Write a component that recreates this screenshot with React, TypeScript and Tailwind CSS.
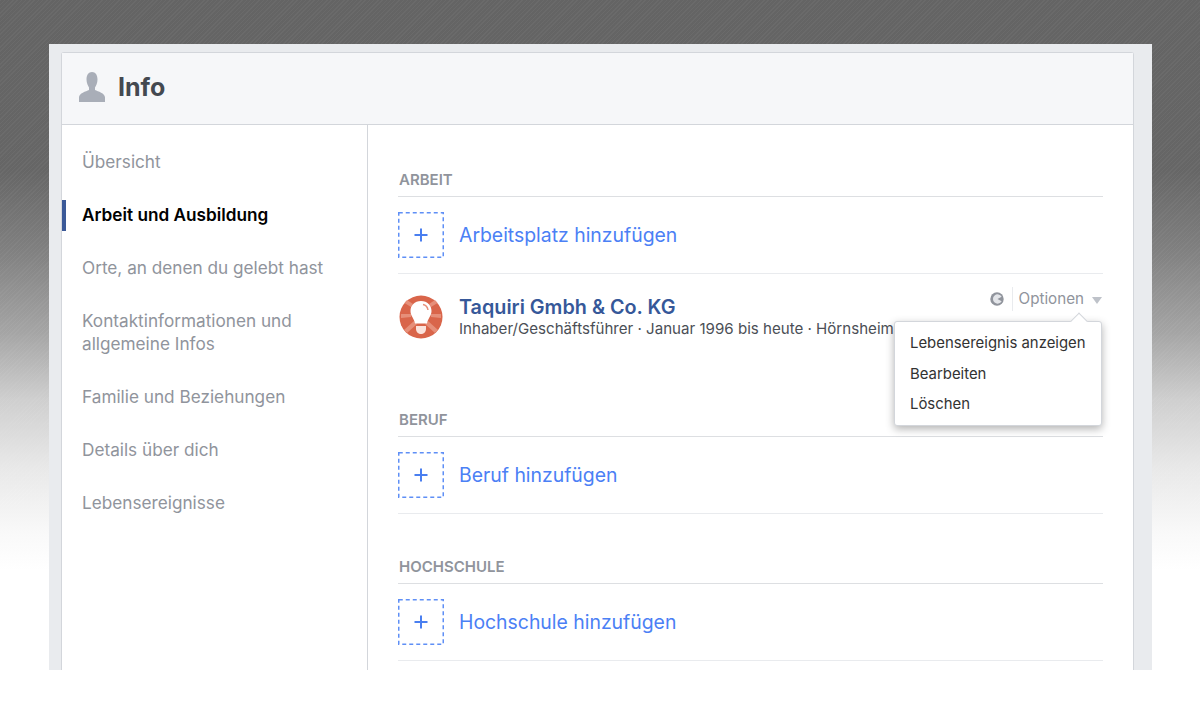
function Section({ title, label }: { title: string; label: string }) {
  return (
    <div>
      <div className="h-[26px] border-b border-[#dddfe2] pl-px text-[15px] font-semibold leading-[17px] text-[#90949c]">{title}</div>
      <div className="flex h-[77px] items-center gap-[15px] border-b border-[#e9ebee]">
        <svg width="46" height="46" viewBox="0 0 46 46" className="shrink-0">
          <rect x="0.750" y="0.750" width="44.500" height="44.500" fill="none" stroke="#5f8ff6" strokeWidth="1.500" strokeDasharray="4 3" />
          <path d="M23 16.500v13M16.500 23h13" stroke="#4a7ff0" strokeWidth="2" />
        </svg>
        <span className="text-[19.4px] leading-[24px] text-[#4b80f5]">{label}</span>
      </div>
    </div>
  );
}

function NavItem({ children, active, tall }: { children: React.ReactNode; active?: boolean; tall?: boolean }) {
  return (
    <div className={`relative mb-[30px] flex items-center pl-[20px] text-[17.2px] leading-[23px] ${tall ? "h-[46px]" : "h-[23px]"} ${active ? "font-semibold text-black" : "text-[#90949c]"}`}>
      {active && <span className="absolute left-0 top-[-3px] h-[31px] w-[4px] bg-[#3b5998]" />}
      <span>{children}</span>
    </div>
  );
}

export default function App() {
  return (
    <div className="h-[720px] w-[1200px] overflow-hidden bg-[repeating-linear-gradient(135deg,rgba(255,255,255,0.04)_0px,rgba(255,255,255,0.04)_1px,transparent_1px,transparent_3px),linear-gradient(180deg,#646464_0px,#666666_170px,#808080_250px,#a5a5a5_333px,#cfcfcf_400px,#e8e8e8_467px,#f9f9f9_533px,#ffffff_570px)] font-['Inter',sans-serif]">
      <div className="ml-[49px] h-[670px] w-[1103px] pt-[44px]">
        <div className="h-[626px] overflow-hidden bg-[#e9ebee] px-[12px] pt-[8px]">
          <div className="relative h-[618px] w-[1073px] rounded-t-[3px] border border-b-0 border-[#d3d6db] bg-white">
            <div className="flex h-[72px] items-center gap-[13px] border-b border-[#d3d6db] bg-[#f6f7f9] pb-[4px] pl-[17px]">
              <svg width="26" height="30" viewBox="0 0 26 30"><path d="M13 0c3.500 0 5.500 3 5.500 7.500 0 3.500-1.500 6.500-2.500 8v2.500c3 1.500 10 3 10 7.500V30H0v-4.500C0 21 7 19.500 10 18v-2.500c-1-1.500-2.500-4.500-2.500-8C7.500 3 9.500 0 13 0Z" fill="#a9aeb8" /></svg>
              <span className="text-[25px] font-bold leading-[30px] text-[#444950]">Info</span>
            </div>
            <div className="flex h-[545px]">
              <div className="w-[306px] shrink-0 border-r border-[#d3d6db] pt-[25px]">
                <NavItem>Übersicht</NavItem>
                <NavItem active>Arbeit und Ausbildung</NavItem>
                <div className="mt-[1px]">
                  <NavItem>Orte, an denen du gelebt hast</NavItem>
                  <NavItem tall>Kontaktinformationen und<br />allgemeine Infos</NavItem>
                </div>
                <NavItem>Familie und Beziehungen</NavItem>
                <NavItem>Details über dich</NavItem>
                <NavItem>Lebensereignisse</NavItem>
              </div>
              <div className="relative w-[766px] pl-[30px] pr-[30px] pt-[46px]">
                <Section title="ARBEIT" label="Arbeitsplatz hinzufügen" />
                <div className="flex h-[137px] gap-[16px] pt-[21px]">
                  <svg width="44" height="44" viewBox="0 0 44 44" className="ml-px shrink-0">
                    <circle cx="22" cy="22" r="21.500" fill="#d9654a" />
                    <g fill="#e68f79">
                      <path d="M15 26 5 35 8 38 18 29Z" />
                      <path d="M29 26 39 35 36 38 26 29Z" />
                      <path d="M12 19 2 19V23L12 22Z" />
                      <path d="M32 19 42 19V23L32 22Z" />
                      <path d="M14 9 8 5 5.500 8 12 12Z" />
                      <path d="M30 9 36 5 38.500 8 32 12Z" />
                    </g>
                    <path d="M22 6c6.500 0 10.500 4.500 10.500 10 0 5-3.500 7-4.500 12.500H16C15 23 11.500 21 11.500 16 11.500 10.500 15.500 6 22 6Z" fill="#fff" />
                    <path d="M17 31h10v3c0 3-2.500 5-5 5s-5-2-5-5Z" fill="#fbe3dc" />
                    <path d="M24 9.500c2.500.5 4.500 2.500 5 5.500" fill="none" stroke="#e68f79" strokeWidth="1.500" />
                  </svg>
                  <div>
                    <div className="text-[19.8px] font-semibold leading-[24px] text-[#365899]">Taquiri Gmbh &amp; Co. KG</div>
                    <div className="whitespace-nowrap text-[15.1px] leading-[19px] text-[#4b4f56]">Inhaber/Geschäftsführer · Januar 1996 bis heute · Hörnsheim</div>
                  </div>
                </div>
                <Section title="BERUF" label="Beruf hinzufügen" />
                <div className="h-[44px]" />
                <Section title="HOCHSCHULE" label="Hochschule hinzufügen" />

                <div className="absolute right-[31px] top-[162px] flex h-[24px] items-center text-[15.2px] text-[#90949c]">
                  <svg width="14" height="14" viewBox="0 0 15 15"><circle cx="7.500" cy="7.500" r="7.200" fill="#90949c" /><path d="M12.500 5a5 5 0 1 0 0 5L8 7.500Z" fill="#e3e5e9" /></svg>
                  <span className="ml-[8px] mr-[6px] h-[24px] border-l border-[#e9ebee]" />
                  <span>Optionen</span>
                  <span className="ml-[8px] mt-[2px] border-x-[5.500px] border-t-[7px] border-x-transparent border-t-[#bec2c9]" />
                </div>
                <div className="absolute left-[526px] top-[196px] h-[105px] w-[208px] rounded-[3px] border border-[#d3d6db] bg-white pt-[6px] text-[14.9px] leading-[30.500px] text-[#333] shadow-[0_3px_8px_rgba(0,0,0,0.3)]">
                  <span className="absolute right-[16px] top-[-7px] h-[12px] w-[12px] rotate-45 border-l border-t border-[#d3d6db] bg-white" />
                  <div className="relative pl-[15px]">Lebensereignis anzeigen</div>
                  <div className="relative pl-[15px]">Bearbeiten</div>
                  <div className="relative pl-[15px]">Löschen</div>
                </div>
              </div>
            </div>
          </div>
        </div>
      </div>
    </div>
  );
}
